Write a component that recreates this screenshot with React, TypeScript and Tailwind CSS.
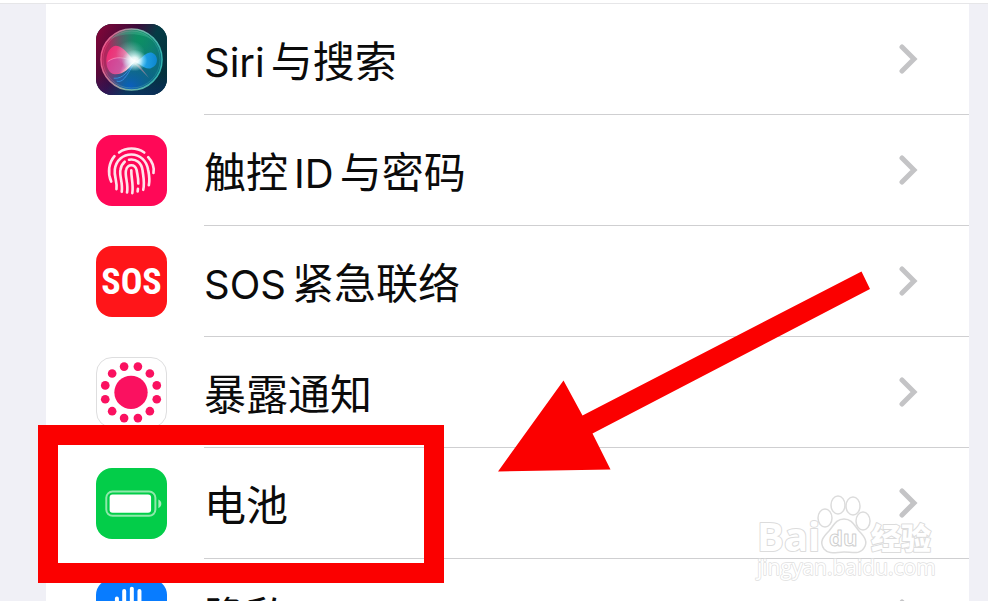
import type { ReactNode } from "react";

function SiriIcon() {
  return (
    <svg viewBox="0 0 72 72" className="size-full">
      <defs>
        <linearGradient id="siri-bg" x1="0" y1="0.2" x2="1" y2="0.7">
          <stop offset="0" stopColor="#7c0638" />
          <stop offset="0.4" stopColor="#3b0c3a" />
          <stop offset="0.65" stopColor="#053b45" />
          <stop offset="1" stopColor="#03303c" />
        </linearGradient>
        <linearGradient id="siri-base" x1="0" y1="0" x2="0" y2="1">
          <stop offset="0.7" stopColor="#1b2a9c" stopOpacity="0" />
          <stop offset="1" stopColor="#1b2a9c" stopOpacity="0.3" />
        </linearGradient>
        <linearGradient id="siri-orb" x1="0" y1="0.3" x2="1" y2="0.6">
          <stop offset="0" stopColor="#c41a55" />
          <stop offset="0.35" stopColor="#7c4670" />
          <stop offset="0.55" stopColor="#137d78" />
          <stop offset="1" stopColor="#0a6a83" />
        </linearGradient>
        <radialGradient id="siri-green" cx="0.62" cy="0.15" r="0.5">
          <stop offset="0" stopColor="#0c8f62" />
          <stop offset="1" stopColor="#0c8f62" stopOpacity="0" />
        </radialGradient>
        <radialGradient id="siri-blue" cx="0.48" cy="0.95" r="0.5">
          <stop offset="0" stopColor="#0b5fc0" />
          <stop offset="1" stopColor="#0b4a8c" stopOpacity="0" />
        </radialGradient>
        <linearGradient id="siri-ring" x1="0" y1="0.4" x2="1" y2="0.6">
          <stop offset="0" stopColor="#f0568c" />
          <stop offset="0.5" stopColor="#7fb5a8" />
          <stop offset="1" stopColor="#2fb3b0" />
        </linearGradient>
        <linearGradient id="siri-pink" x1="0" y1="0" x2="1" y2="0.4">
          <stop offset="0" stopColor="#f2246e" />
          <stop offset="0.7" stopColor="#e0558f" />
          <stop offset="1" stopColor="#ffffff" />
        </linearGradient>
        <linearGradient id="siri-cyan" x1="0" y1="0" x2="1" y2="0">
          <stop offset="0" stopColor="#ffffff" />
          <stop offset="0.4" stopColor="#22a5e8" />
          <stop offset="1" stopColor="#0d86cf" />
        </linearGradient>
        <radialGradient id="siri-glow">
          <stop offset="0" stopColor="#fff" />
          <stop offset="0.3" stopColor="#f4ffff" stopOpacity="0.9" />
          <stop offset="1" stopColor="#bff" stopOpacity="0" />
        </radialGradient>
      </defs>
      <rect width="72" height="72" fill="url(#siri-bg)" />
      <rect width="72" height="72" fill="url(#siri-base)" />
      <circle cx="36" cy="36" r="31" fill="url(#siri-orb)" />
      <circle cx="36" cy="36" r="31" fill="url(#siri-green)" />
      <circle cx="36" cy="36" r="31" fill="url(#siri-blue)" />
      <path d="M14 16C25 3 47 3 58 17C48 9 27 8 14 16Z" fill="#4bc49a" opacity="0.35" />
      <path d="M40 38C33 32 28 22 20 22C8 24 7 49 19 51C30 51 33 44 40 38Z" fill="url(#siri-pink)" />
      <path d="M11 39C19 32 29 33 38 38C29 44 25 52 17 50C13 48 11 44 11 39Z" fill="#a35bc7" opacity="0.3" />
      <path d="M12 38C20 32 29 34 38 38" stroke="#ff9cc0" strokeWidth="0.7" fill="none" />
      <path d="M38 38C46 38 49 28 56 29C64 31 64 43 55 45C48 46 44 39 38 38Z" fill="url(#siri-cyan)" />
      <path d="M18 55C28 56 32 47 38 41C31 53 27 60 21 58" stroke="#3b9bea" strokeWidth="0.8" fill="#245fb0" fillOpacity="0.5" />
      <path d="M39 40L54 55L44 42" fill="#c795a8" opacity="0.6" />
      <ellipse cx="35" cy="30" rx="15" ry="13" fill="url(#siri-glow)" opacity="0.35" />
      <ellipse cx="39" cy="37" rx="13" ry="11" fill="url(#siri-glow)" />
      <circle cx="36" cy="36" r="31" fill="none" stroke="url(#siri-ring)" strokeWidth="1.5" />
      <circle cx="36" cy="36" r="29" fill="none" stroke="url(#siri-ring)" strokeWidth="0.5" opacity="0.7" />
    </svg>
  );
}

function TouchIdIcon() {
  return (
    <svg
      viewBox="47 37 215 213"
      className="size-full"
      fill="none"
      stroke="#ffe3ea"
      strokeWidth="8"
      strokeLinecap="round"
    >
      <path d="M117 89C139 73 170 73 193 89" />
      <path d="M103 100C86 120 81 149 93 177" />
      <path d="M205 103C220 119 224 134 221 151" />
      <path d="M109 200C112 177 101 161 104 140C108 112 129 95 154 95C181 95 201 115 205 142C208 158 211 170 207 188" />
      <path d="M125 208C129 181 117 160 121 141C123 130 127 123 134 117" />
      <path d="M147 111C169 107 185 121 188 143C190 161 195 179 190 202" />
      <path d="M141 210C146 184 133 159 138 142C143 123 165 123 170 142C172 156 176 167 175 183" />
      <path d="M157 212C161 186 153 165 154 143" />
      <path d="M174 199L173 207" />
    </svg>
  );
}

function ExposureIcon() {
  const dots = Array.from({ length: 12 }, (_, i) => ((15 + i * 30) * Math.PI) / 180);

  return (
    <svg viewBox="3 3 207 207" className="size-full" fill="#fa1160">
      <circle cx="105" cy="106" r="50" />
      {dots.map((angle) => (
        <circle
          key={angle}
          cx={105 + 80 * Math.cos(angle)}
          cy={106 + 80 * Math.sin(angle)}
          r="13"
        />
      ))}
    </svg>
  );
}

function BatteryIcon() {
  return (
    <svg viewBox="0 0 214 214" className="size-full">
      <rect x="31" y="71" width="148" height="73" rx="19" fill="none" stroke="#8fe9ab" strokeWidth="6" />
      <rect x="41" y="80" width="125" height="55" rx="9" fill="#fff" />
      <path d="M188 95C200 99 200 116 188 121Z" fill="#a5edbb" />
    </svg>
  );
}

function HandIcon() {
  return (
    <svg viewBox="0 0 214 214" className="size-full" fill="none" stroke="#fff" strokeWidth="12" strokeLinecap="round">
      <path d="M63 59V110M85 36V105M108 29V105M131 36V110" />
      <path d="M63 105V135Q68 180 105 180Q135 180 150 130L160 108" />
      <path d="M63 105H131V140Q105 175 75 145Z" fill="#fff" />
    </svg>
  );
}

function Chevron() {
  return (
    <svg
      viewBox="0 0 20 30"
      className="h-[30px] w-5 shrink-0"
      fill="none"
      stroke="#c4c4c6"
      strokeWidth="5"
      strokeLinecap="round"
      strokeLinejoin="miter"
    >
      <path d="M3 3L15 15L3 27" />
    </svg>
  );
}

function Highlight() {
  return (
    <>
      <div className="pointer-events-none absolute -top-[23px] -left-2 z-10 h-[158px] w-[406px] border-[20px] border-[#fb0000]" />
      <svg
        viewBox="498 271 372 201"
        className="pointer-events-none absolute -top-[177px] left-[452px] z-10 h-[201px] w-[372px]"
        fill="#fb0000"
      >
        <path d="M498 471.500L563.500 380.500L582.500 415.500L861.500 271.500L870 289L592.500 433.500L610.500 469.500Z" />
      </svg>
    </>
  );
}

function Watermark() {
  return (
    <svg
      viewBox="0 0 184 92"
      className="pointer-events-none absolute right-[50px] bottom-[14px] z-20 h-[92px] w-[184px]"
      fill="#fff"
      stroke="#dcdcdc"
      strokeWidth="1.500"
      strokeLinejoin="round"
      fontFamily="'Open Sans', 'Noto Sans CJK SC', sans-serif"
    >
      <g fontWeight="700" paintOrder="stroke" strokeWidth="2">
        <text x="3" y="56" fontSize="40">Bai</text>
        <text x="117" y="54" fontSize="30" fontWeight="900">经验</text>
      </g>
      <ellipse cx="71" cy="23" rx="7" ry="9" />
      <ellipse cx="84" cy="10" rx="7" ry="9" />
      <ellipse cx="99" cy="11" rx="7" ry="9" />
      <ellipse cx="109" cy="26" rx="7" ry="9" />
      <path d="M90 24C98 24 100 30 105 36C111 42 114 47 110 53C106 60 98 57 90 57C82 57 75 60 70 54C65 47 69 42 75 36C80 30 82 24 90 24Z" />
      <text x="75" y="51" fontSize="22" fontWeight="700" strokeWidth="1" stroke="#cfcfcf">du</text>
      <text x="3" y="80" fontSize="21" paintOrder="stroke" stroke="#dfdfdf">
        jingyan.baidu.com
      </text>
    </svg>
  );
}

type Item = {
  id: string;
  label: string[];
  tile: string;
  icon: ReactNode;
  highlighted?: boolean;
};

const items: Item[] = [
  { id: "siri", label: ["Siri", "与搜索"], tile: "bg-[#053b45]", icon: <SiriIcon /> },
  { id: "touch-id", label: ["触控", "ID", "与密码"], tile: "bg-[#ff0857]", icon: <TouchIdIcon /> },
  {
    id: "sos",
    label: ["SOS", "紧急联络"],
    tile: "bg-[#ff1519]",
    icon: (
      <span className="font-['Liberation_Sans_Narrow','Roboto_Condensed','Roboto',sans-serif] text-[36px] leading-none font-bold text-white">
        SOS
      </span>
    ),
  },
  {
    id: "exposure",
    label: ["暴露通知"],
    tile: "bg-white border border-[#dededf]",
    icon: <ExposureIcon />,
  },
  { id: "battery", label: ["电池"], tile: "bg-[#03cd49]", icon: <BatteryIcon />, highlighted: true },
  { id: "privacy", label: ["隐私"], tile: "bg-[#087cff]", icon: <HandIcon /> },
];

const isLatin = (text: string) => /^[A-Za-z]+$/.test(text);

export default function App() {
  return (
    <main className="relative h-screen overflow-hidden bg-[#f0f0f6] font-['Inter','Noto_Sans_CJK_SC',sans-serif] text-[#0b0b0b]">
      <div className="h-[4px] border-b border-[#e6e6e8] bg-white" />
      <ul className="mr-[19px] ml-[46px] bg-white">
        {items.map((item) => (
          <li key={item.id} className="relative">
            <a href={`#${item.id}`} className="flex items-center gap-[37px] pl-[50px]">
              <div
                className={`flex size-[71px] shrink-0 items-center justify-center overflow-hidden rounded-2xl ${item.tile}`}
              >
                {item.icon}
              </div>
              <div className="flex h-[111px] flex-1 items-center justify-between border-b border-[#cfcfd1] pr-[50px]">
                <span className="flex items-baseline gap-1.5 pt-1.5 text-[42px] leading-none">
                  {item.label.map((part) => (
                    <span key={part} className={isLatin(part) ? "text-[40px]" : undefined}>
                      {part}
                    </span>
                  ))}
                </span>
                <Chevron />
              </div>
            </a>
            {item.highlighted && <Highlight />}
          </li>
        ))}
      </ul>
      <Watermark />
    </main>
  );
}
